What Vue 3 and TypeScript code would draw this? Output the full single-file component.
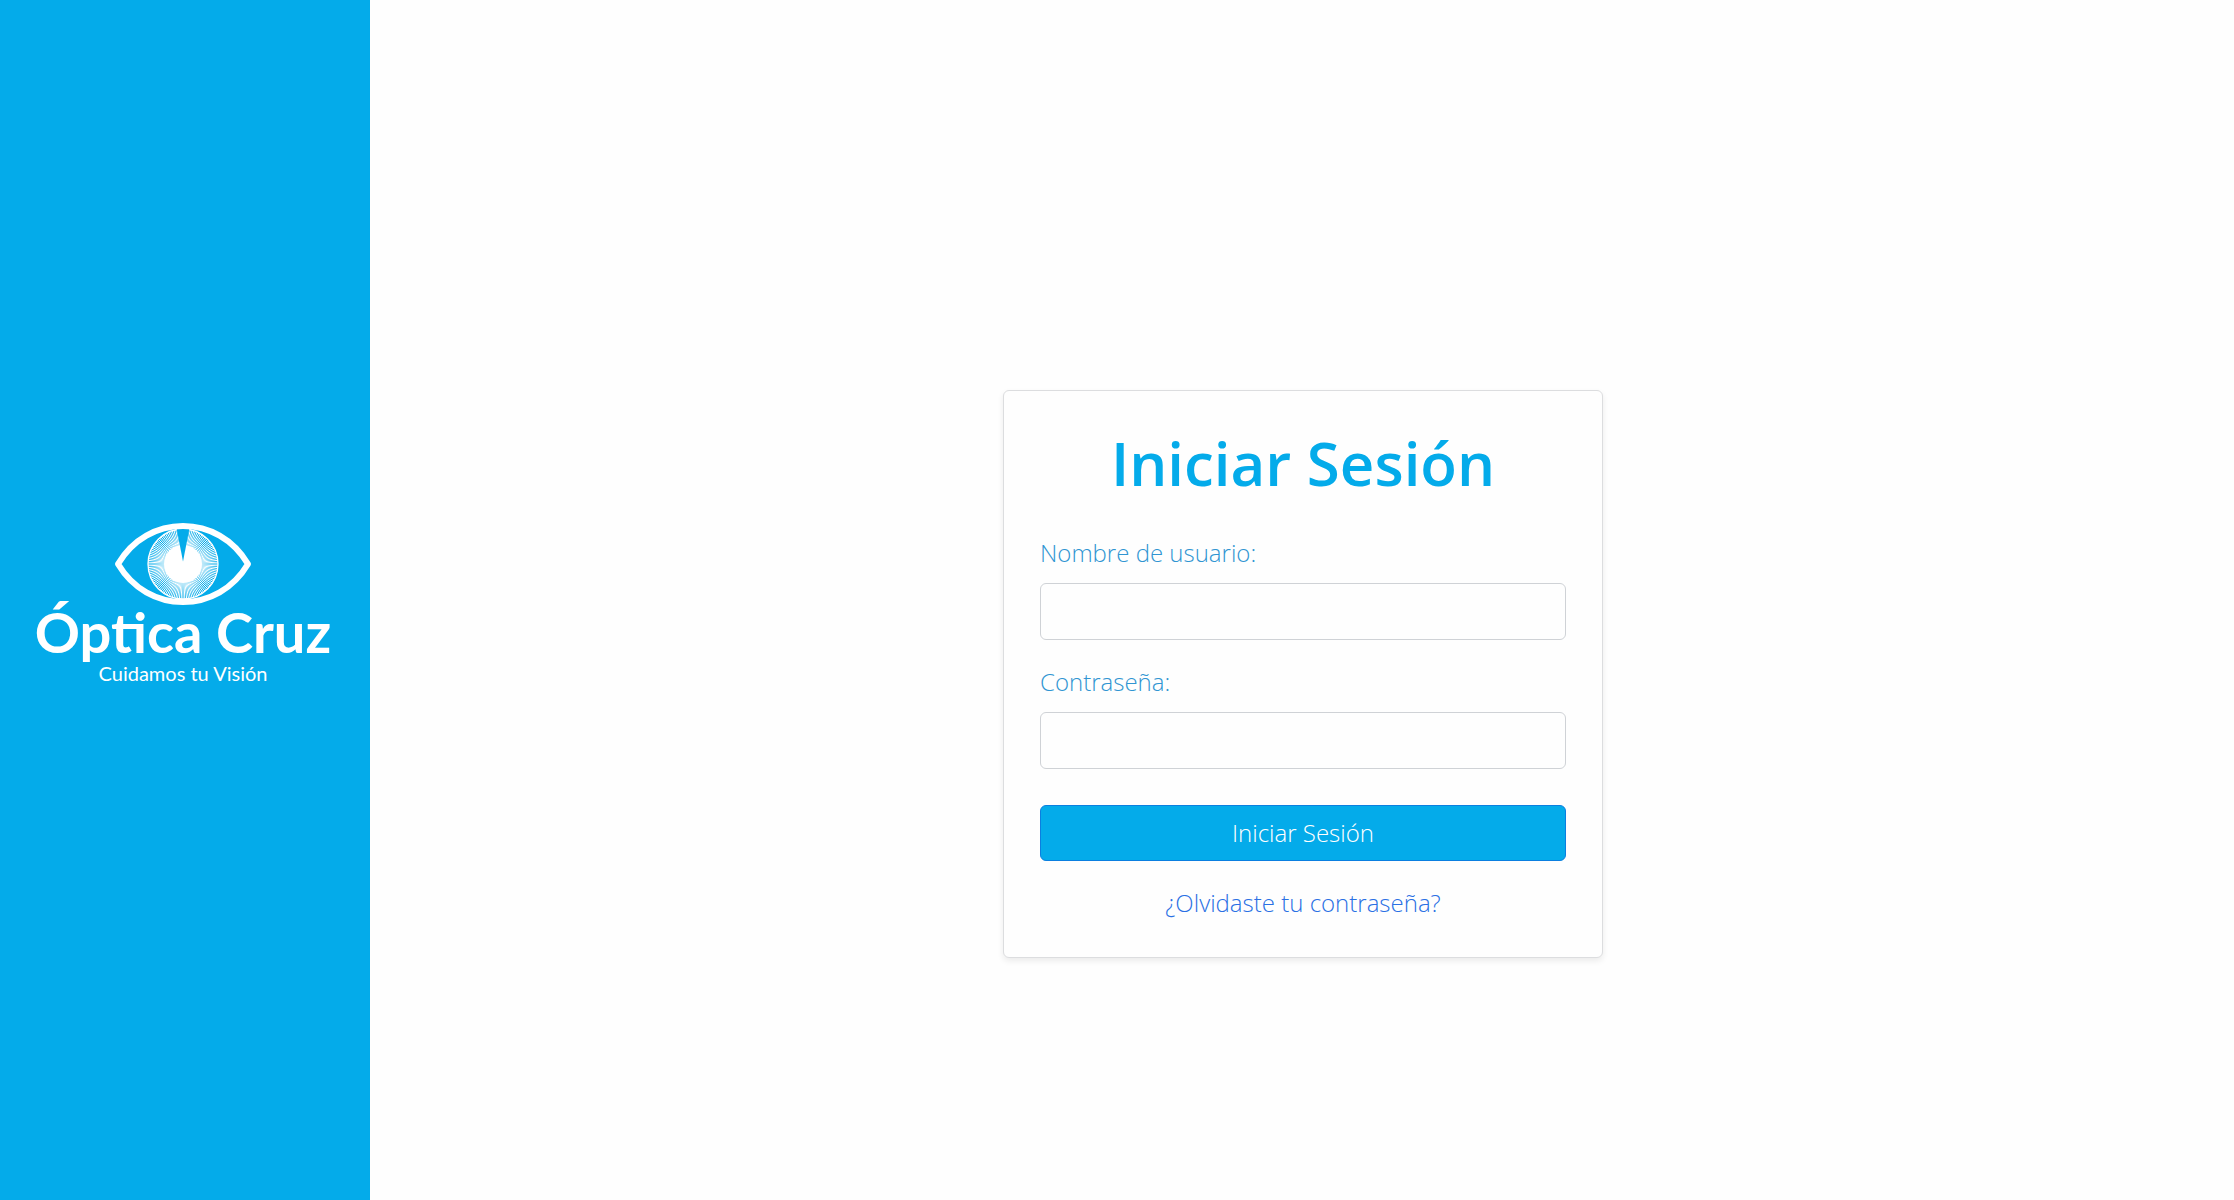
<script setup lang="ts">
import { ref } from 'vue'

interface Ray {
  x1: number
  y1: number
  x2: number
  y2: number
}

const username = ref('')
const password = ref('')

const RAY_COUNT = 120
const rays: Ray[] = Array.from({ length: RAY_COUNT }, (_, i) => {
  const angle = (i / RAY_COUNT) * Math.PI * 2
  const cos = Math.cos(angle)
  const sin = Math.sin(angle)
  return { x1: 70 + cos * 17, y1: 42 + sin * 17, x2: 70 + cos * 35, y2: 42 + sin * 35 }
})
</script>

<template>
  <div class="page">
    <aside class="sidebar">
      <div class="brand">
        <svg class="eye" viewBox="0 0 140 84" aria-hidden="true">
          <g fill="none" stroke="#fff">
            <line
              v-for="(ray, i) in rays"
              :key="i"
              :x1="ray.x1"
              :y1="ray.y1"
              :x2="ray.x2"
              :y2="ray.y2"
              stroke-width="1"
            />
            <circle cx="70" cy="42" r="35" stroke-width="1.3" />
          </g>
          <circle cx="70" cy="42" r="19" fill="#fff" />
          <path d="M63.500 6h13L70 39.500z" fill="#04abea" />
          <path
            d="M5 42C20 17 44 4 70 4s50 13 65 38C120 67 96 80 70 80S20 67 5 42z"
            fill="none"
            stroke="#fff"
            stroke-width="6"
            stroke-linejoin="round"
          />
        </svg>
        <span class="name">Óptica Cruz</span>
        <span class="tagline">Cuidamos tu Visión</span>
      </div>
    </aside>
    <main class="content">
      <form class="card" @submit.prevent>
        <h1>Iniciar Sesión</h1>
        <div class="field">
          <label for="username">Nombre de usuario:</label>
          <input id="username" v-model="username" type="text" autocomplete="username" />
        </div>
        <div class="field">
          <label for="password">Contraseña:</label>
          <input id="password" v-model="password" type="password" autocomplete="current-password" />
        </div>
        <button type="submit">Iniciar Sesión</button>
        <a href="#">¿Olvidaste tu contraseña?</a>
      </form>
    </main>
  </div>
</template>

<style>
body {
  margin: 0;
  background: #fefefe;
}
</style>

<style scoped>
.page {
  display: flex;
  min-height: 100vh;
  font-family: "Open Sans", "Noto Sans", sans-serif;
  font-size: 24px;
  font-weight: 300;
  line-height: 36px;
}

.sidebar {
  display: flex;
  flex: 0 0 370px;
  box-sizing: border-box;
  align-items: center;
  justify-content: center;
  padding: 10px 4px 0 0;
  background: #04abea;
}

.brand {
  display: flex;
  flex-direction: column;
  align-items: center;
  color: #fff;
  font-family: Lato, sans-serif;
}

.eye {
  width: 140px;
  height: 84px;
}

.name {
  font-size: 56px;
  font-weight: 700;
  line-height: 52px;
}

.tagline {
  font-size: 20px;
  font-weight: 400;
  line-height: 30px;
}

.content {
  display: flex;
  flex: 1;
  align-items: center;
  justify-content: center;
  padding: 148px 0 0 2px;
}

.card {
  display: flex;
  flex-direction: column;
  box-sizing: border-box;
  width: 100%;
  max-width: 600px;
  padding: 36px;
  border: 1px solid #dcdddf;
  border-radius: 6px;
  background: #fefefe;
  box-shadow: 0 3px 6px rgba(0, 0, 0, 0.08);
}

h1 {
  margin: 0 0 36px;
  color: #04abea;
  font-size: 60px;
  font-weight: 600;
  line-height: 72px;
  text-align: center;
}

.field {
  display: flex;
  flex-direction: column;
  gap: 12px;
  margin-bottom: 24px;
}

label {
  color: #3095d2;
}

input {
  box-sizing: border-box;
  width: 100%;
  height: 57px;
  padding: 9px 18px;
  border: 1px solid #cfd2d6;
  border-radius: 6px;
  background: #fefefe;
  color: #212529;
  font: inherit;
}

button {
  margin: 12px 0 24px;
  padding: 9px 18px;
  border: 1px solid #0b7fe0;
  border-radius: 6px;
  background: #04abea;
  color: #fff;
  font: inherit;
  cursor: pointer;
}

a {
  align-self: center;
  color: #2a70e4;
  text-decoration: none;
}
</style>
